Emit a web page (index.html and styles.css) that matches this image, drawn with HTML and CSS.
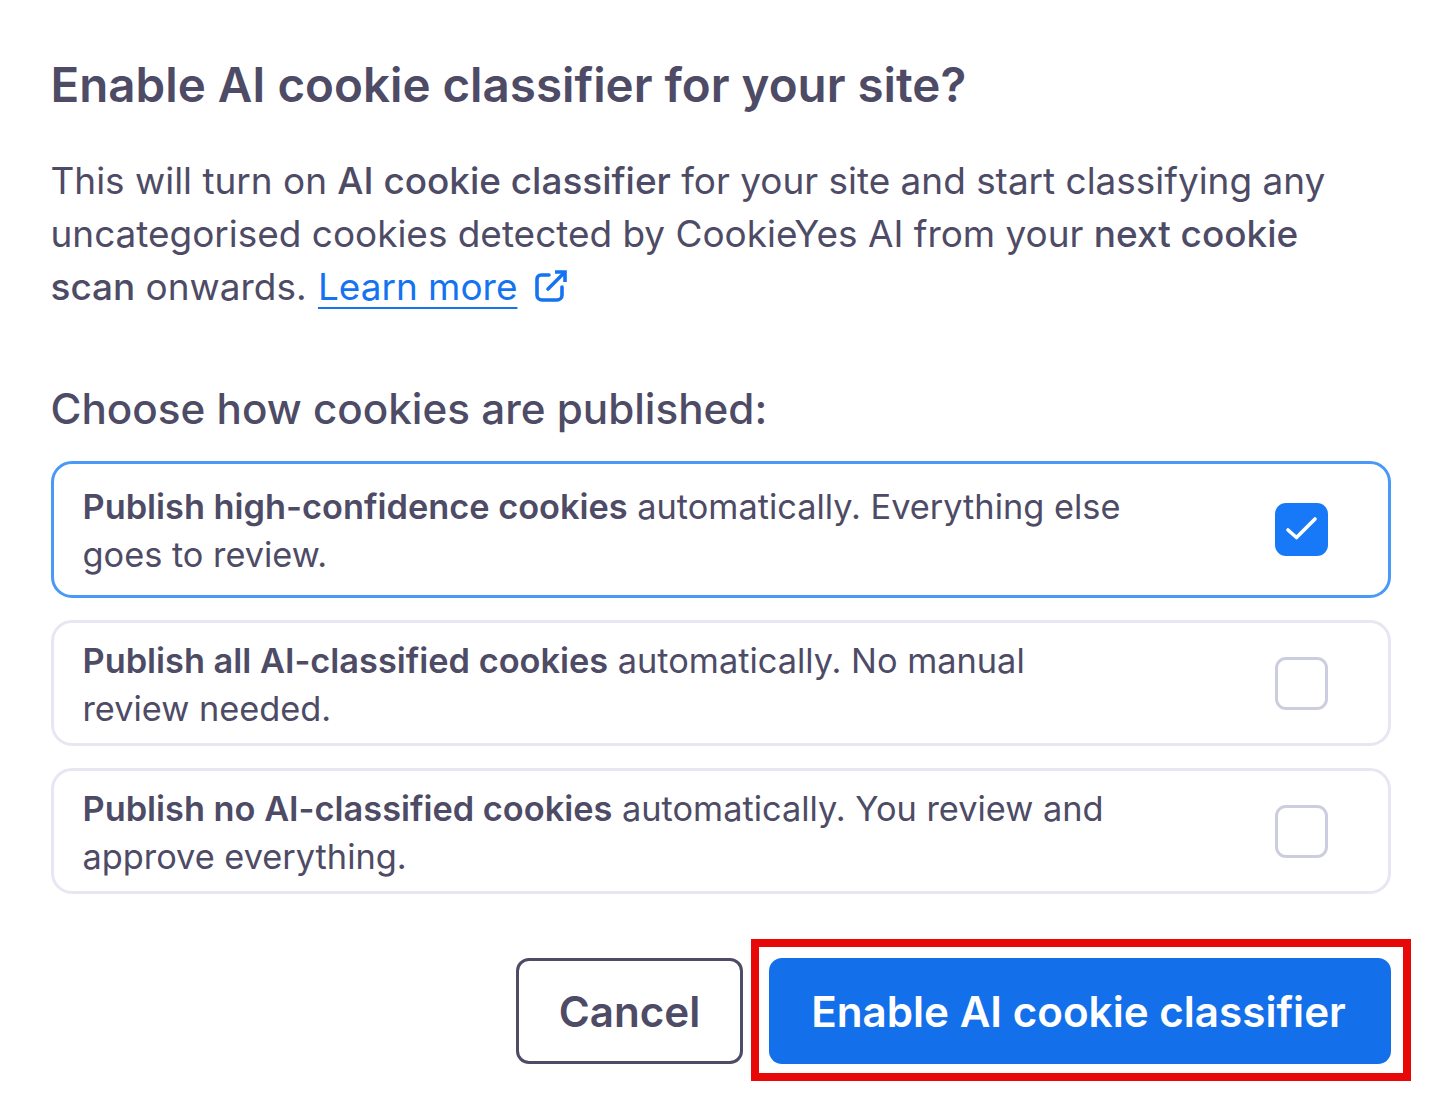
FILE: index.html
```html
<!DOCTYPE html>
<html lang="en">
<head>
    <meta charset="UTF-8">
    <meta name="viewport" content="width=device-width, initial-scale=1.0">
    <title>Enable AI cookie classifier</title>
    <link rel="stylesheet" href="styles.css">
</head>
<body>
    <div class="dialog">
        <h1 class="dialog-title">Enable AI cookie classifier for your site?</h1>
        <p class="dialog-text">
            This will turn on <strong>AI cookie classifier</strong> for your site and start classifying any uncategorised cookies detected by CookieYes AI from your <strong>next cookie scan</strong> onwards.
            <a class="learn-more" href="#">Learn more</a>
            <svg class="external-icon" viewBox="0 0 32 32" fill="none" stroke="#1473f0" stroke-width="3.600" stroke-linecap="round" stroke-linejoin="round">
                <path d="M14 5H6a4 4 0 0 0-4 4v16a5 5 0 0 0 5 5h15a5 5 0 0 0 5-5v-8"/>
                <path d="M13 19L29 3"/>
                <path d="M20 2h10v10" stroke-linecap="butt" stroke-linejoin="miter"/>
            </svg>
        </p>

        <h2 class="section-title">Choose how cookies are published:</h2>

        <div class="options">
            <div class="option option-selected">
                <div class="option-text"><strong>Publish high-confidence cookies</strong> automatically. Everything else goes to review.</div>
                <span class="checkbox checkbox-checked">
                    <svg viewBox="0 0 53 53" fill="none" stroke="#fff" stroke-width="3.600" stroke-linecap="round" stroke-linejoin="round">
                        <path d="M13 27l8.500 7.500L40 16"/>
                    </svg>
                </span>
            </div>
            <div class="option">
                <div class="option-text"><strong>Publish all AI-classified cookies</strong> automatically. No manual review needed.</div>
                <span class="checkbox"></span>
            </div>
            <div class="option">
                <div class="option-text"><strong>Publish no AI-classified cookies</strong> automatically. You review and approve everything.</div>
                <span class="checkbox"></span>
            </div>
        </div>

        <div class="actions">
            <button class="btn btn-cancel">Cancel</button>
            <div class="highlight-wrap">
                <button class="btn btn-primary">Enable AI cookie classifier</button>
                <div class="highlight-box"></div>
            </div>
        </div>
    </div>
</body>
</html>
```

FILE: styles.css
```css
* {
    box-sizing: border-box;
}

body {
    font-family: Inter, "Liberation Sans", sans-serif;
    margin: 0;
    padding: 0;
    background: #fff;
    color: #4e4b66;
}

.dialog {
    width: 1444px;
    height: 1120px;
    padding: 58px 53px 0 50.500px;
}

.dialog-title {
    font-size: 47.500px;
    font-weight: 600;
    line-height: 54px;
    margin: 0 0 42px;
}

.dialog-text {
    max-width: 1290px;
    font-size: 36.930px;
    line-height: 53px;
    margin: 0 0 71px;
}

.dialog-text strong {
    font-weight: 500;
}

.option-text strong {
    font-weight: 600;
}

.learn-more {
    color: #1473f0;
    text-decoration: underline;
    text-decoration-thickness: 2px;
    text-underline-offset: 7px;
    margin-left: 1px;
}

.external-icon {
    width: 32px;
    height: 32px;
    margin-left: 7px;
    vertical-align: -2px;
}

.section-title {
    font-size: 42.200px;
    font-weight: 500;
    line-height: 50px;
    margin: 0 0 27px;
}

.options {
    display: flex;
    flex-direction: column;
    gap: 22px;
    margin-left: 0.500px;
}

.option {
    display: flex;
    align-items: center;
    justify-content: space-between;
    border: 3px solid #e6e7f2;
    border-radius: 21px;
    padding: 14px 60px 10px 28.500px;
}

.option-selected {
    border-color: #4a98f7;
    padding-top: 19px;
    padding-bottom: 16px;
}

.option-text {
    width: 1045px;
    font-size: 34.330px;
    line-height: 48px;
}

.checkbox {
    width: 53px;
    height: 53px;
    flex-shrink: 0;
    border: 3px solid #cdcde0;
    border-radius: 11px;
    background: #fff;
    margin-bottom: 3px;
}

.checkbox-checked {
    border: 0;
    background: #1779f7;
    margin-bottom: 4px;
}

.checkbox-checked svg {
    display: block;
    width: 53px;
    height: 53px;
}

.actions {
    display: flex;
    justify-content: flex-end;
    gap: 26px;
    margin-top: 64px;
}

.btn {
    display: block;
    height: 106px;
    font-family: inherit;
    font-size: 42.200px;
    font-weight: 600;
    border-radius: 13px;
    cursor: pointer;
}

.btn-cancel {
    width: 227px;
    background: #fff;
    border: 3px solid #4e4b66;
    color: #4e4b66;
}

.btn-primary {
    width: 622px;
    background: #1370ea;
    border: 0;
    color: #fff;
    padding: 0 3px 0 0;
}

.highlight-wrap {
    position: relative;
}

.highlight-box {
    position: absolute;
    top: -19px;
    right: -20px;
    bottom: -17px;
    left: -18px;
    border: 8px solid #e80808;
}
```
